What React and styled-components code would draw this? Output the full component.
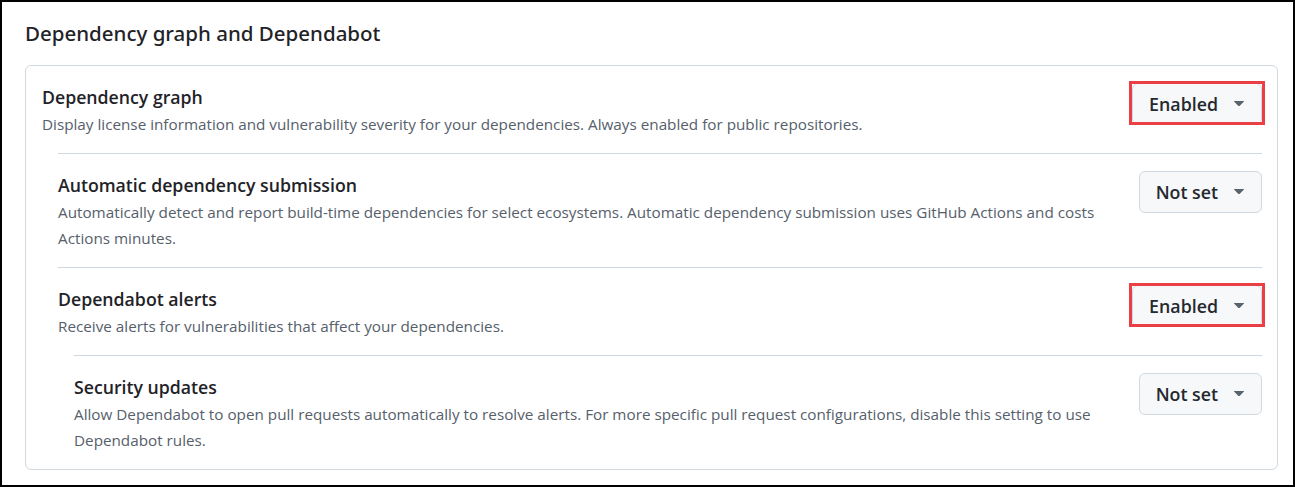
import React from "react";
import styled, { createGlobalStyle } from "styled-components";

const GlobalStyle = createGlobalStyle`
  html, body { margin: 0; padding: 0; background: #ffffff; }
  body {
    font-family: "Open Sans", "Noto Sans", sans-serif;
    color: #1f2328;
  }
  * { box-sizing: border-box; }
`;

const Frame = styled.div`
  width: 1295px;
  height: 487px;
  border: 2px solid #000000;
  padding: 16px 15px 0 23px;
  background: #ffffff;
`;

const Heading = styled.h2`
  margin: 0 0 15px 0;
  font-family: "Noto Sans", "Open Sans", sans-serif;
  font-size: 20.5px;
  line-height: 31.5px;
  font-weight: 500;
  color: #1f2328;
`;

const Card = styled.div`
  border: 1px solid #d1d9e0;
  border-radius: 6px;
  padding: 0 15px 0 16px;
`;

const Nested = styled.div`
  margin-left: 16px;
`;

const Item = styled.div`
  display: flex;
  align-items: flex-start;
  justify-content: space-between;
  gap: 32px;
  padding: 17px 0 16px 0;
  border-top: ${(p) => (p.$divided ? "1px solid #d1d9e0" : "none")};
`;

const Text = styled.div`
  flex: 1;
  min-width: 0;
`;

const Title = styled.div`
  font-size: 17.7px;
  line-height: 28px;
  font-weight: 600;
  color: #1f2328;
`;

const Desc = styled.div`
  font-size: 15.25px;
  line-height: 26px;
  font-weight: 400;
  color: #56606b;
`;

const ButtonWrap = styled.div`
  position: relative;
  flex: none;
`;

const Highlight = styled.span`
  position: absolute;
  top: -2px;
  bottom: 0;
  left: -3px;
  right: -3px;
  border: 3px solid #ea3f45;
  pointer-events: none;
`;

const SelectButton = styled.button`
  display: flex;
  align-items: center;
  gap: 16px;
  height: 42px;
  padding: 0 17px 0 16px;
  background: #f6f8fa;
  border: 1px solid #d1d9e0;
  border-radius: 6px;
  font-family: "Open Sans", "Noto Sans", sans-serif;
  font-size: 17.8px;
  font-weight: 600;
  color: #25292e;
  cursor: pointer;
`;

const Caret = () => (
  <svg width="10" height="5.6" viewBox="4.4 7 7.2 4" fill="#59636e" aria-hidden="true">
    <path d="m4.427 7.427 3.396 3.396a.25.25 0 0 0 .354 0l3.396-3.396A.25.25 0 0 0 11.396 7H4.604a.25.25 0 0 0-.177.427Z" />
  </svg>
);

function Select({ label, highlighted }) {
  return (
    <ButtonWrap>
      <SelectButton type="button">
        <span>{label}</span>
        <Caret />
      </SelectButton>
      {highlighted && <Highlight />}
    </ButtonWrap>
  );
}

function Setting({ title, desc, value, highlighted, divided }) {
  return (
    <Item $divided={divided}>
      <Text>
        <Title>{title}</Title>
        <Desc>{desc}</Desc>
      </Text>
      <Select label={value} highlighted={highlighted} />
    </Item>
  );
}

export default function App() {
  return (
    <>
      <GlobalStyle />
      <Frame>
        <Heading>Dependency graph and Dependabot</Heading>
        <Card>
          <Setting
            title="Dependency graph"
            desc="Display license information and vulnerability severity for your dependencies. Always enabled for public repositories."
            value="Enabled"
            highlighted
          />
          <Nested>
            <Setting
              divided
              title="Automatic dependency submission"
              desc="Automatically detect and report build-time dependencies for select ecosystems. Automatic dependency submission uses GitHub Actions and costs Actions minutes."
              value="Not set"
            />
            <Setting
              divided
              title="Dependabot alerts"
              desc="Receive alerts for vulnerabilities that affect your dependencies."
              value="Enabled"
              highlighted
            />
            <Nested>
              <Setting
                divided
                title="Security updates"
                desc="Allow Dependabot to open pull requests automatically to resolve alerts. For more specific pull request configurations, disable this setting to use Dependabot rules."
                value="Not set"
              />
            </Nested>
          </Nested>
        </Card>
      </Frame>
    </>
  );
}
